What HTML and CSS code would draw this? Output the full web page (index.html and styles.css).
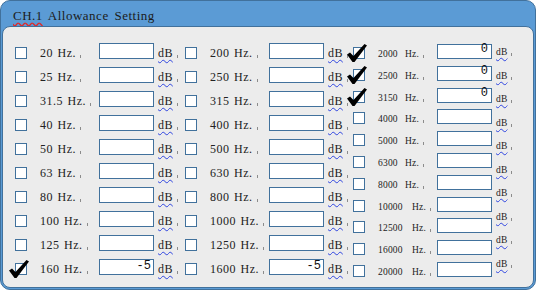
FILE: index.html
```html
<!DOCTYPE html>
<html>
<head>
  <title>CH.1 Allowance Setting</title>
  <link rel="stylesheet" href="styles.css">
</head>
<body>
  <div class="panel">
    <div class="panel-title"><span class="typo">CH.1</span> Allowance Setting</div>
    <div class="panel-body">

      <!-- low band -->
      <div class="col">
        <div class="row"><span class="box"></span><span class="freq">20 Hz.<i class="mark"></i></span><span class="field"></span><span class="unit"><u>dB</u><i class="mark"></i></span></div>
        <div class="row"><span class="box"></span><span class="freq">25 Hz.<i class="mark"></i></span><span class="field"></span><span class="unit"><u>dB</u><i class="mark"></i></span></div>
        <div class="row"><span class="box"></span><span class="freq">31.5 Hz.<i class="mark"></i></span><span class="field"></span><span class="unit"><u>dB</u><i class="mark"></i></span></div>
        <div class="row"><span class="box"></span><span class="freq">40 Hz.<i class="mark"></i></span><span class="field"></span><span class="unit"><u>dB</u><i class="mark"></i></span></div>
        <div class="row"><span class="box"></span><span class="freq">50 Hz.<i class="mark"></i></span><span class="field"></span><span class="unit"><u>dB</u><i class="mark"></i></span></div>
        <div class="row"><span class="box"></span><span class="freq">63 Hz.<i class="mark"></i></span><span class="field"></span><span class="unit"><u>dB</u><i class="mark"></i></span></div>
        <div class="row"><span class="box"></span><span class="freq">80 Hz.<i class="mark"></i></span><span class="field"></span><span class="unit"><u>dB</u><i class="mark"></i></span></div>
        <div class="row"><span class="box"></span><span class="freq">100 Hz.<i class="mark"></i></span><span class="field"></span><span class="unit"><u>dB</u><i class="mark"></i></span></div>
        <div class="row"><span class="box"></span><span class="freq">125 Hz.<i class="mark"></i></span><span class="field"></span><span class="unit"><u>dB</u><i class="mark"></i></span></div>
        <div class="row"><span class="box"><svg class="tick" viewBox="0 0 20 18"><polygon points="0,10.5 3,8.5 6.5,12 17.5,0 20,1.5 7.5,18 5.5,18"/></svg></span><span class="freq">160 Hz.<i class="mark"></i></span><span class="field">-5</span><span class="unit"><u>dB</u><i class="mark"></i></span></div>
      </div>

      <!-- mid band -->
      <div class="col col-mid">
        <div class="row"><span class="box"></span><span class="freq">200 Hz.<i class="mark"></i></span><span class="field"></span><span class="unit"><u>dB</u><i class="mark"></i></span></div>
        <div class="row"><span class="box"></span><span class="freq">250 Hz.<i class="mark"></i></span><span class="field"></span><span class="unit"><u>dB</u><i class="mark"></i></span></div>
        <div class="row"><span class="box"></span><span class="freq">315 Hz.<i class="mark"></i></span><span class="field"></span><span class="unit"><u>dB</u><i class="mark"></i></span></div>
        <div class="row"><span class="box"></span><span class="freq">400 Hz.<i class="mark"></i></span><span class="field"></span><span class="unit"><u>dB</u><i class="mark"></i></span></div>
        <div class="row"><span class="box"></span><span class="freq">500 Hz.<i class="mark"></i></span><span class="field"></span><span class="unit"><u>dB</u><i class="mark"></i></span></div>
        <div class="row"><span class="box"></span><span class="freq">630 Hz.<i class="mark"></i></span><span class="field"></span><span class="unit"><u>dB</u><i class="mark"></i></span></div>
        <div class="row"><span class="box"></span><span class="freq">800 Hz.<i class="mark"></i></span><span class="field"></span><span class="unit"><u>dB</u><i class="mark"></i></span></div>
        <div class="row"><span class="box"></span><span class="freq">1000 Hz.<i class="mark"></i></span><span class="field"></span><span class="unit"><u>dB</u><i class="mark"></i></span></div>
        <div class="row"><span class="box"></span><span class="freq">1250 Hz.<i class="mark"></i></span><span class="field"></span><span class="unit"><u>dB</u><i class="mark"></i></span></div>
        <div class="row"><span class="box"></span><span class="freq">1600 Hz.<i class="mark"></i></span><span class="field">-5</span><span class="unit"><u>dB</u><i class="mark"></i></span></div>
      </div>

      <!-- high band -->
      <div class="col-high">
        <div class="list">
          <div class="row-sm"><span class="box"><svg class="tick" viewBox="0 0 20 18"><polygon points="0,10.5 3,8.5 6.5,12 17.5,0 20,1.5 7.5,18 5.5,18"/></svg></span><span class="num">2000</span><span class="num">Hz.<i class="mark"></i></span><span class="field field-sm">0</span></div>
          <div class="row-sm"><span class="box"><svg class="tick" viewBox="0 0 20 18"><polygon points="0,10.5 3,8.5 6.5,12 17.5,0 20,1.5 7.5,18 5.5,18"/></svg></span><span class="num">2500</span><span class="num">Hz.<i class="mark"></i></span><span class="field field-sm">0</span></div>
          <div class="row-sm"><span class="box"><svg class="tick" viewBox="0 0 20 18"><polygon points="0,10.5 3,8.5 6.5,12 17.5,0 20,1.5 7.5,18 5.5,18"/></svg></span><span class="num">3150</span><span class="num">Hz.<i class="mark"></i></span><span class="field field-sm">0</span></div>
          <div class="row-sm"><span class="box"></span><span class="num">4000</span><span class="num">Hz.<i class="mark"></i></span><span class="field field-sm"></span></div>
          <div class="row-sm"><span class="box"></span><span class="num">5000</span><span class="num">Hz.<i class="mark"></i></span><span class="field field-sm"></span></div>
          <div class="row-sm"><span class="box"></span><span class="num">6300</span><span class="num">Hz.<i class="mark"></i></span><span class="field field-sm"></span></div>
          <div class="row-sm"><span class="box"></span><span class="num">8000</span><span class="num">Hz.<i class="mark"></i></span><span class="field field-sm"></span></div>
          <div class="row-sm"><span class="box"></span><span class="num">10000</span><span class="num num-far">Hz.<i class="mark"></i></span><span class="field field-sm"></span></div>
          <div class="row-sm"><span class="box"></span><span class="num">12500</span><span class="num num-far">Hz.<i class="mark"></i></span><span class="field field-sm"></span></div>
          <div class="row-sm"><span class="box"></span><span class="num">16000</span><span class="num num-far">Hz.<i class="mark"></i></span><span class="field field-sm"></span></div>
          <div class="row-sm"><span class="box"></span><span class="num">20000</span><span class="num num-far">Hz.<i class="mark"></i></span><span class="field field-sm"></span></div>
        </div>
        <div class="units">
          <span class="unit-sm"><u>dB</u><i class="mark"></i></span>
          <span class="unit-sm"><u>dB</u><i class="mark"></i></span>
          <span class="unit-sm"><u>dB</u><i class="mark"></i></span>
          <span class="unit-sm"><u>dB</u><i class="mark"></i></span>
          <span class="unit-sm"><u>dB</u><i class="mark"></i></span>
          <span class="unit-sm"><u>dB</u><i class="mark"></i></span>
          <span class="unit-sm"><u>dB</u><i class="mark"></i></span>
          <span class="unit-sm"><u>dB</u><i class="mark"></i></span>
          <span class="unit-sm"><u>dB</u><i class="mark"></i></span>
          <span class="unit-sm"><u>dB</u><i class="mark"></i></span>
        </div>
      </div>

    </div>
  </div>
</body>
</html>
```

FILE: styles.css
```css
html, body {
  margin: 0;
  background-color: #ffffff;
}

/* Panel frame */
.panel {
  width: 536px;
  height: 290px;
  box-sizing: border-box;
  background-color: #5b9bd5;
  border: 1px solid #41719c;
  border-radius: 10px;
  padding: 0 1px 1px 1px;
  display: flex;
  flex-direction: column;
}

.panel-title {
  height: 25px;
  box-sizing: border-box;
  padding: 6px 0 0 11px;
  font-family: "Liberation Serif", serif;
  font-size: 13px;
  line-height: 18px;
  letter-spacing: 0.5px;
  word-spacing: 2px;
  color: #1b1b1b;
  white-space: pre;
}

.typo {
  text-decoration: underline wavy #e02828;
  text-decoration-skip-ink: none;
  text-underline-offset: 2px;
}

.panel-body {
  flex: 1;
  background-color: #ececec;
  border: 1px solid #41719c;
  border-radius: 8px;
  padding: 12px 0 0 12px;
  display: flex;
}

/* Columns */
.col {
  display: grid;
  grid-template-rows: repeat(10, 24px);
  width: 170px;
}

.col-mid {
  width: 168px;
}

.row {
  display: grid;
  grid-template-columns: 25px 59px 55px 1fr;
  align-items: start;
}

.box {
  width: 12px;
  height: 12px;
  box-sizing: border-box;
  margin-top: 8px;
  border: 1px solid #41719c;
  background-color: #ffffff;
  position: relative;
}

.tick {
  position: absolute;
  left: -7px;
  top: -4px;
  width: 20px;
  height: 18px;
  fill: #000000;
}

.freq, .unit {
  padding-top: 6px;
  font-family: "Liberation Serif", serif;
  font-size: 12px;
  line-height: 16px;
  letter-spacing: 0.5px;
  word-spacing: 1px;
  color: #222222;
  white-space: nowrap;
}

.unit {
  padding-left: 4px;
  letter-spacing: 0.4px;
}

u {
  text-decoration: underline wavy #2f45e0;
  text-decoration-skip-ink: none;
  text-underline-offset: 2px;
  text-decoration-thickness: 1px;
}

.mark {
  display: inline-block;
  width: 1px;
  height: 3px;
  margin-left: 4px;
  vertical-align: -1px;
  background-color: #8c8c8c;
}

.field {
  height: 16px;
  box-sizing: border-box;
  margin-top: 4px;
  padding-right: 2px;
  border: 1px solid #41719c;
  background-color: #ffffff;
  font-family: "Liberation Mono", monospace;
  font-size: 12px;
  line-height: 13px;
  text-align: right;
  color: #111111;
}

/* High band, denser rows */
.col-high {
  display: flex;
}

.list {
  display: grid;
  grid-template-rows: repeat(11, 21.8px);
}

.row-sm {
  display: grid;
  grid-template-columns: 25px 27px 32px 55px;
  align-items: start;
}

.num, .unit-sm {
  padding-top: 10px;
  font-family: "Liberation Serif", serif;
  font-size: 9.5px;
  line-height: 11px;
  letter-spacing: 0.2px;
  color: #222222;
  white-space: nowrap;
}

.num-far {
  padding-left: 7px;
}

.field-sm {
  height: 15px;
  margin-top: 5px;
  line-height: 9px;
  padding-right: 3px;
}

.units {
  display: grid;
  grid-template-rows: repeat(10, 23.5px);
  padding-left: 4px;
}

.unit-sm {
  padding-top: 8px;
}

.unit-sm .mark {
  margin-left: 3px;
}
```
